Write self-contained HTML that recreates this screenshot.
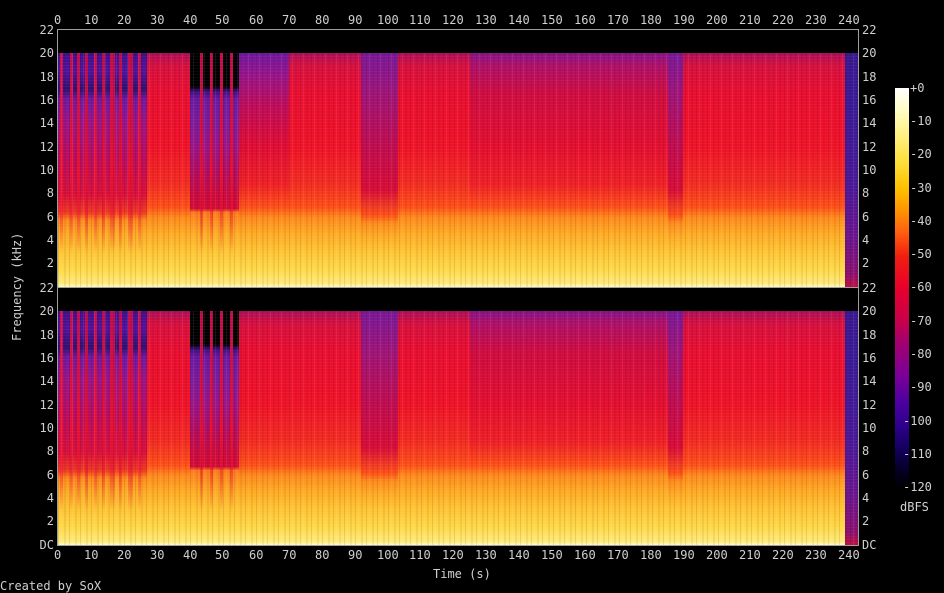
<!DOCTYPE html>
<html><head><meta charset="utf-8"><style>
body{margin:0;background:#000;width:944px;height:593px;overflow:hidden;position:relative;font-family:"DejaVu Sans Mono","Liberation Mono",monospace;font-size:12px;color:#d0d0d0}
.ch{position:absolute;left:58px;width:800px;height:257px;background:#000;overflow:hidden}
.s{position:absolute;top:0;height:257px}
.n{background:linear-gradient(to bottom,#000 0,#000 8.9%,#b0105a 9.1%,#d8103e 14%,#ea0e30 25%,#f01228 45%,#f42c22 60%,#ff5018 69%,#ff8a1c 73%,#ffaa24 79%,#ffc434 86%,#ffd848 93%,#ffe878 98.5%,#fffac0 100%)}
.p{background:linear-gradient(to bottom,#000 0,#000 8.9%,#40108c 9.1%,#50149c 16%,#301070 23%,#7018a0 27%,#9a1488 36%,#b80c60 50%,#d8103c 64%,#f03a22 71%,#ff8a1c 74%,#ffaa24 79%,#ffc434 86%,#ffd848 93%,#ffe878 98.5%,#fffac0 100%)}
.c{background:linear-gradient(to bottom,#000 0,#000 22%,#401080 24%,#6a18a0 27%,#7a1a9a 35%,#981488 45%,#b00c60 55%,#c80a40 64%,#d40a36 69.5%,#ff7a1c 71%,#ffaa24 79%,#ffc434 86%,#ffd848 93%,#ffe878 98.5%,#fffac0 100%)}
.d{background:linear-gradient(to bottom,#000 0,#000 8.9%,#8a1488 9.1%,#b01068 14%,#d00c40 25%,#e40e30 45%,#f02026 60%,#ff5018 69%,#ff8a1c 73%,#ffaa24 79%,#ffc434 86%,#ffd848 93%,#ffe878 98.5%,#fffac0 100%)}
.d2{background:linear-gradient(to bottom,#000 0,#000 8.9%,#7018a0 9.1%,#9a1488 18%,#c00c58 30%,#e00c34 45%,#f02026 60%,#ff5018 69%,#ff8a1c 73%,#ffaa24 79%,#ffc434 86%,#ffd848 93%,#ffe878 98.5%,#fffac0 100%)}
.f{background:linear-gradient(to bottom,#000 0,#000 8.9%,#7a1898 9.1%,#a01478 25%,#c00c50 45%,#d80c38 62%,#ff5018 72%,#ff8a1c 75%,#ffaa24 80%,#ffc434 86%,#ffd848 93%,#ffe878 98.5%,#fffac0 100%)}
.k{background:linear-gradient(to bottom,#000 0,#000 8.9%,#3a1890 9.1%,#3a1a98 30%,#4a1898 60%,#6a1490 80%,#8a1070 95%,#c01040 100%)}
.tx{position:absolute;left:0;top:23px;width:800px;height:234px;background:repeating-linear-gradient(90deg,rgba(0,0,0,.10) 0 1px,transparent 1px 3px,rgba(255,255,255,.07) 3px 4px,transparent 4px 6px,rgba(0,0,0,.06) 6px 8px,transparent 8px 11px)}
.tx2{position:absolute;left:0;top:23px;width:800px;height:234px;background:repeating-linear-gradient(180deg,rgba(255,255,255,.04) 0 1px,transparent 1px 3px)}
.rs{position:absolute;top:23px;height:200px;background:linear-gradient(to bottom,#c00c50,#e81030 60%,rgba(240,40,30,0));width:3px}
.bd{position:absolute;border:1px solid #a0a0a0}
.l{position:absolute;white-space:nowrap;line-height:14px}
.lr{text-align:right;width:30px}
</style></head><body>

<div class="ch" style="top:30px">
<div class="s p" style="left:0;width:89px"></div>
<div class="s n" style="left:89px;width:43px"></div>
<div class="s c" style="left:132px;width:49px"></div>
<div class="s d2" style="left:181px;width:50px"></div>
<div class="s n" style="left:231px;width:72px"></div>
<div class="s f" style="left:303px;width:37px"></div>
<div class="s n" style="left:340px;width:72px"></div>
<div class="s d" style="left:412px;width:198px"></div>
<div class="s f" style="left:610px;width:15px"></div>
<div class="s n" style="left:625px;width:162px"></div>
<div class="s k" style="left:787px;width:13px"></div>
<div class="rs" style="left:2px"></div><div class="rs" style="left:12px"></div><div class="rs" style="left:19px"></div><div class="rs" style="left:27px"></div><div class="rs" style="left:36px"></div><div class="rs" style="left:44px"></div><div class="rs" style="left:52px;width:5px"></div><div class="rs" style="left:61px"></div><div class="rs" style="left:70px;width:5px"></div><div class="rs" style="left:80px"></div>
<div class="rs" style="left:142px"></div><div class="rs" style="left:152px"></div><div class="rs" style="left:162px"></div><div class="rs" style="left:172px"></div>
<div class="tx"></div><div class="tx2"></div>
</div>

<div class="ch" style="top:288px">
<div class="s p" style="left:0;width:89px"></div>
<div class="s n" style="left:89px;width:43px"></div>
<div class="s c" style="left:132px;width:49px"></div>
<div class="s n" style="left:181px;width:50px"></div>
<div class="s n" style="left:231px;width:72px"></div>
<div class="s f" style="left:303px;width:37px"></div>
<div class="s n" style="left:340px;width:72px"></div>
<div class="s d" style="left:412px;width:198px"></div>
<div class="s f" style="left:610px;width:15px"></div>
<div class="s n" style="left:625px;width:162px"></div>
<div class="s k" style="left:787px;width:13px"></div>
<div class="rs" style="left:2px"></div><div class="rs" style="left:12px"></div><div class="rs" style="left:19px"></div><div class="rs" style="left:27px"></div><div class="rs" style="left:36px"></div><div class="rs" style="left:44px"></div><div class="rs" style="left:52px;width:5px"></div><div class="rs" style="left:61px"></div><div class="rs" style="left:70px;width:5px"></div><div class="rs" style="left:80px"></div>
<div class="rs" style="left:142px"></div><div class="rs" style="left:152px"></div><div class="rs" style="left:162px"></div><div class="rs" style="left:172px"></div>
<div class="tx"></div><div class="tx2"></div>
</div>

<div class="bd" style="left:57px;top:29px;width:800px;height:257px"></div>
<div class="bd" style="left:57px;top:287px;width:800px;height:257px"></div>

<div class="l" style="left:54px;top:13px">0</div><div class="l" style="left:84px;top:13px">10</div><div class="l" style="left:117px;top:13px">20</div><div class="l" style="left:150px;top:13px">30</div><div class="l" style="left:183px;top:13px">40</div><div class="l" style="left:215px;top:13px">50</div><div class="l" style="left:249px;top:13px">60</div><div class="l" style="left:282px;top:13px">70</div><div class="l" style="left:315px;top:13px">80</div><div class="l" style="left:348px;top:13px">90</div><div class="l" style="left:377px;top:13px">100</div><div class="l" style="left:409px;top:13px">110</div><div class="l" style="left:442px;top:13px">120</div><div class="l" style="left:475px;top:13px">130</div><div class="l" style="left:508px;top:13px">140</div><div class="l" style="left:541px;top:13px">150</div><div class="l" style="left:574px;top:13px">160</div><div class="l" style="left:607px;top:13px">170</div><div class="l" style="left:640px;top:13px">180</div><div class="l" style="left:673px;top:13px">190</div><div class="l" style="left:706px;top:13px">200</div><div class="l" style="left:739px;top:13px">210</div><div class="l" style="left:772px;top:13px">220</div><div class="l" style="left:805px;top:13px">230</div><div class="l" style="left:838px;top:13px">240</div>

<div class="l" style="left:54px;top:548px">0</div><div class="l" style="left:84px;top:548px">10</div><div class="l" style="left:117px;top:548px">20</div><div class="l" style="left:150px;top:548px">30</div><div class="l" style="left:183px;top:548px">40</div><div class="l" style="left:215px;top:548px">50</div><div class="l" style="left:249px;top:548px">60</div><div class="l" style="left:282px;top:548px">70</div><div class="l" style="left:315px;top:548px">80</div><div class="l" style="left:348px;top:548px">90</div><div class="l" style="left:377px;top:548px">100</div><div class="l" style="left:409px;top:548px">110</div><div class="l" style="left:442px;top:548px">120</div><div class="l" style="left:475px;top:548px">130</div><div class="l" style="left:508px;top:548px">140</div><div class="l" style="left:541px;top:548px">150</div><div class="l" style="left:574px;top:548px">160</div><div class="l" style="left:607px;top:548px">170</div><div class="l" style="left:640px;top:548px">180</div><div class="l" style="left:673px;top:548px">190</div><div class="l" style="left:706px;top:548px">200</div><div class="l" style="left:739px;top:548px">210</div><div class="l" style="left:772px;top:548px">220</div><div class="l" style="left:805px;top:548px">230</div><div class="l" style="left:838px;top:548px">240</div>

<div class="l lr" style="left:24px;top:23px">22</div><div class="l lr" style="left:24px;top:46px">20</div><div class="l lr" style="left:24px;top:70px">18</div><div class="l lr" style="left:24px;top:93px">16</div><div class="l lr" style="left:24px;top:116px">14</div><div class="l lr" style="left:24px;top:140px">12</div><div class="l lr" style="left:24px;top:163px">10</div><div class="l lr" style="left:24px;top:186px">8</div><div class="l lr" style="left:24px;top:210px">6</div><div class="l lr" style="left:24px;top:233px">4</div><div class="l lr" style="left:24px;top:256px">2</div>
<div class="l lr" style="left:24px;top:281px">22</div><div class="l lr" style="left:24px;top:304px">20</div><div class="l lr" style="left:24px;top:328px">18</div><div class="l lr" style="left:24px;top:351px">16</div><div class="l lr" style="left:24px;top:374px">14</div><div class="l lr" style="left:24px;top:398px">12</div><div class="l lr" style="left:24px;top:421px">10</div><div class="l lr" style="left:24px;top:444px">8</div><div class="l lr" style="left:24px;top:468px">6</div><div class="l lr" style="left:24px;top:491px">4</div><div class="l lr" style="left:24px;top:514px">2</div><div class="l lr" style="left:24px;top:538px">DC</div>
<div class="l" style="left:862px;top:23px">22</div><div class="l" style="left:862px;top:46px">20</div><div class="l" style="left:862px;top:70px">18</div><div class="l" style="left:862px;top:93px">16</div><div class="l" style="left:862px;top:116px">14</div><div class="l" style="left:862px;top:140px">12</div><div class="l" style="left:862px;top:163px">10</div><div class="l" style="left:862px;top:186px">8</div><div class="l" style="left:862px;top:210px">6</div><div class="l" style="left:862px;top:233px">4</div><div class="l" style="left:862px;top:256px">2</div>
<div class="l" style="left:862px;top:281px">22</div><div class="l" style="left:862px;top:304px">20</div><div class="l" style="left:862px;top:328px">18</div><div class="l" style="left:862px;top:351px">16</div><div class="l" style="left:862px;top:374px">14</div><div class="l" style="left:862px;top:398px">12</div><div class="l" style="left:862px;top:421px">10</div><div class="l" style="left:862px;top:444px">8</div><div class="l" style="left:862px;top:468px">6</div><div class="l" style="left:862px;top:491px">4</div><div class="l" style="left:862px;top:514px">2</div><div class="l" style="left:862px;top:538px">DC</div>

<div style="position:absolute;left:895px;top:88px;width:14px;height:400px;background:linear-gradient(to bottom,#ffffff 0%,#fffcc0 6%,#fff080 12%,#ffe040 18%,#ffc000 25%,#ff9a00 30%,#ff6010 36%,#f02010 42%,#e8002a 50%,#c8004a 58%,#a00070 64%,#7a0098 72%,#5000a0 78%,#300090 84%,#140060 90%,#06002a 95%,#000 100%)"></div>
<div class="l" style="left:910px;top:81px">+0</div><div class="l" style="left:910px;top:114px">-10</div><div class="l" style="left:910px;top:147px">-20</div><div class="l" style="left:910px;top:181px">-30</div><div class="l" style="left:910px;top:214px">-40</div><div class="l" style="left:910px;top:247px">-50</div><div class="l" style="left:910px;top:280px">-60</div><div class="l" style="left:910px;top:314px">-70</div><div class="l" style="left:910px;top:347px">-80</div><div class="l" style="left:910px;top:380px">-90</div><div class="l" style="left:903px;top:414px">-100</div><div class="l" style="left:903px;top:447px">-110</div><div class="l" style="left:903px;top:480px">-120</div>
<div class="l" style="left:900px;top:500px">dBFS</div>

<div class="l" style="left:433px;top:567px">Time (s)</div>
<div class="l" style="left:0;top:579px">Created by SoX</div>
<div class="l" style="left:-37px;top:280px;transform:rotate(-90deg);width:108px;text-align:center">Frequency (kHz)</div>
</body></html>
